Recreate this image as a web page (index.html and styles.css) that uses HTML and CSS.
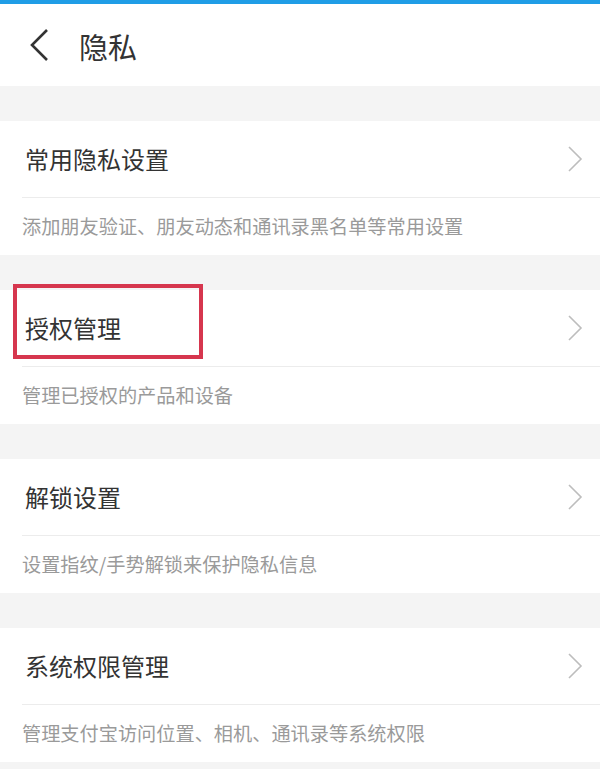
FILE: index.html
```html
<!DOCTYPE html>
<html lang="zh">
<head>
<meta charset="utf-8">
<link rel="stylesheet" href="styles.css">
</head>
<body>
<div class="topbar"></div>
<header class="header">
  <svg class="back" width="22" height="34" viewBox="0 0 22 34"><polyline points="19,2 4,17 19,32" fill="none" stroke="#333" stroke-width="2.6"/></svg>
  <h1 class="title">隐私</h1>
</header>
<div class="gap"></div>
<section class="card">
  <div class="row"><span class="label">常用隐私设置</span><svg class="chev" width="16" height="26" viewBox="0 0 16 26"><polyline points="2,1 14,13 2,25" fill="none" stroke="#bdbdbd" stroke-width="1.6"/></svg></div>
  <div class="desc">添加朋友验证、朋友动态和通讯录黑名单等常用设置</div>
</section>
<div class="gap"></div>
<section class="card">
  <div class="row"><span class="label">授权管理</span><svg class="chev" width="16" height="26" viewBox="0 0 16 26"><polyline points="2,1 14,13 2,25" fill="none" stroke="#bdbdbd" stroke-width="1.6"/></svg></div>
  <div class="desc">管理已授权的产品和设备</div>
  <div class="highlight"></div>
</section>
<div class="gap"></div>
<section class="card">
  <div class="row"><span class="label">解锁设置</span><svg class="chev" width="16" height="26" viewBox="0 0 16 26"><polyline points="2,1 14,13 2,25" fill="none" stroke="#bdbdbd" stroke-width="1.6"/></svg></div>
  <div class="desc">设置指纹/手势解锁来保护隐私信息</div>
</section>
<div class="gap"></div>
<section class="card">
  <div class="row"><span class="label">系统权限管理</span><svg class="chev" width="16" height="26" viewBox="0 0 16 26"><polyline points="2,1 14,13 2,25" fill="none" stroke="#bdbdbd" stroke-width="1.6"/></svg></div>
  <div class="desc">管理支付宝访问位置、相机、通讯录等系统权限</div>
</section>
</body>
</html>
```
FILE: styles.css
```css
html, body {
  margin: 0;
  padding: 0;
  background: #f4f4f4;
  font-family: "Noto Sans CJK SC", "Noto Sans", sans-serif;
}
.topbar {
  height: 4px;
  background: #1f9de6;
}
.header {
  height: 82px;
  background: #fff;
  display: flex;
  align-items: center;
  padding-left: 28px;
  gap: 29px;
}
.back {
  display: block;
}
.title {
  margin: 0;
  font-size: 29px;
  font-weight: normal;
  color: #333;
  line-height: 1;
  padding-top: 2px;
}
.gap {
  height: 35px;
}
.card {
  position: relative;
  background: #fff;
  padding-left: 22px;
}
.row {
  height: 76px;
  display: flex;
  align-items: center;
  justify-content: space-between;
  border-bottom: 1px solid #ececec;
  padding-right: 17px;
}
.label {
  font-size: 24px;
  color: #333;
  padding-left: 3px;
  line-height: 1;
}
.chev {
  display: block;
}
.desc {
  height: 57px;
  display: flex;
  align-items: center;
  font-size: 19.2px;
  color: #9a9a9a;
  padding-bottom: 2px;
  box-sizing: border-box;
}
.highlight {
  position: absolute;
  left: 13px;
  top: -6px;
  width: 190px;
  height: 75px;
  box-sizing: border-box;
  border: 4px solid #d6364e;
}
```
